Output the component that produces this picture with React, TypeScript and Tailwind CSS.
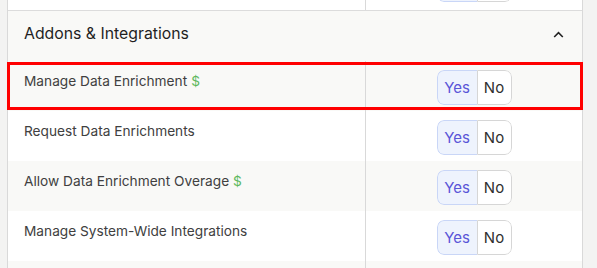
import React from "react";

type Row = { label: string; paid?: boolean; bg: string; highlight?: boolean };

const rows: Row[] = [
  { label: "Manage Data Enrichment", paid: true, bg: "bg-[#f9f9f7]", highlight: true },
  { label: "Request Data Enrichments", bg: "bg-white" },
  { label: "Allow Data Enrichment Overage", paid: true, bg: "bg-[#f9f9f7]" },
  { label: "Manage System-Wide Integrations", bg: "bg-white" },
  { label: "", bg: "bg-[#f9f9f7]" },
];

function Toggle({ empty }: { empty?: boolean }) {
  return (
    <div className="flex h-[35px] w-[75px] rounded-[7px] overflow-hidden text-[15px] leading-none">
      <div className="flex w-[40px] items-center justify-center rounded-l-[7px] border border-r-0 border-[#c9d6f7] bg-[#eef3fd] text-[#5a55d8]">
        {empty ? "" : "Yes"}
      </div>
      <div className="flex flex-1 items-center justify-center rounded-r-[7px] border border-[#d6d6d6] bg-white text-[#2f2f2f]">
        {empty ? "" : "No"}
      </div>
    </div>
  );
}

export default function App() {
  return (
    <div
      className="h-[268px] w-[597px] overflow-hidden bg-[#f3f3f2] pl-[7px] pr-[14px]"
      style={{ fontFamily: "Inter, 'Noto Sans', sans-serif" }}
    >
      <div className="border-x border-[#d9d9d9]">
        {/* top partial row */}
        <div className="flex h-[11px] border-b border-[#dcdcdc] bg-white">
          <div className="w-[358px] border-r border-[#d9d9d9]" />
          <div className="flex flex-1 justify-center overflow-hidden">
            <div className="mt-[-33px]">
              <Toggle empty />
            </div>
          </div>
        </div>
        {/* header */}
        <div className="flex h-[50px] items-center justify-between bg-[#f9f9f7] pl-4 pr-[18px]">
          <span className="mt-[-4px] text-[15.8px] text-[#1f1f1f]">Addons &amp; Integrations</span>
          <svg width="11" height="7" viewBox="0 0 11 7" className="mt-[-4px]">
            <path d="M1.2 6 L5.5 1.6 L9.8 6" fill="none" stroke="#222" strokeWidth="1.6" />
          </svg>
        </div>
        {rows.map((r, i) => (
          <div key={i} className={`relative flex h-[50px] ${r.bg}`}>
            <div className="w-[358px] border-r border-[#d9d9d9] pl-4 pt-[10px] text-[13.7px] leading-5 text-[#404040]">
              {r.label}
              {r.paid && <span className="ml-1 text-[#5cb85c]">$</span>}
            </div>
            <div className="flex flex-1 justify-center pt-[9px]">{r.label && <Toggle />}</div>
            {r.highlight && (
              <div className="pointer-events-none absolute left-[-1px] right-[-1px] top-[1px] bottom-[1px] border-[3px] border-[#ff0000]" />
            )}
          </div>
        ))}
      </div>
    </div>
  );
}
